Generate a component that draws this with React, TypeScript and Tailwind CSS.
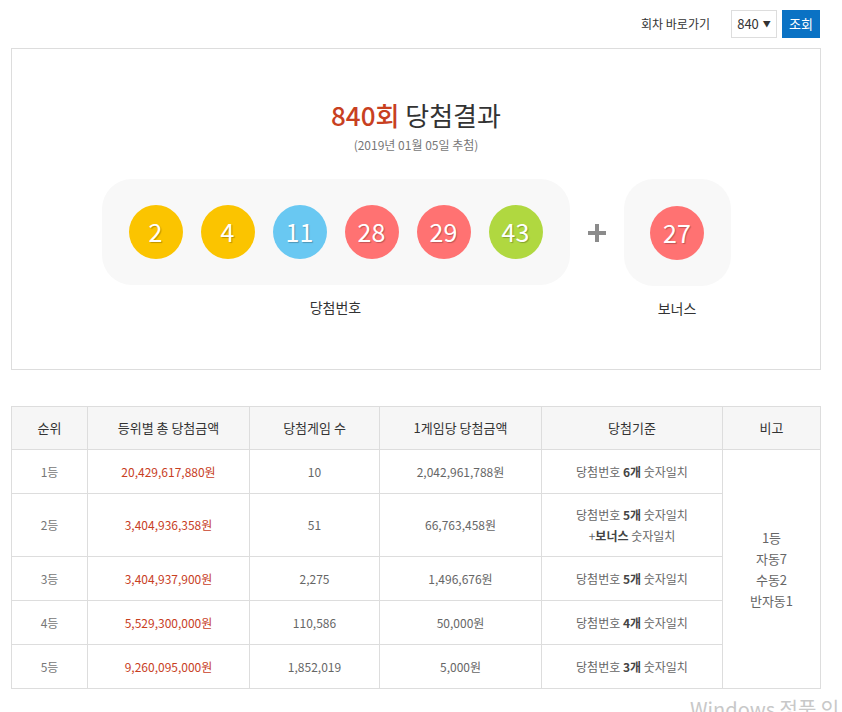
import React from "react";

const balls = [
  { n: 2, c: "bg-[#fbc400]" },
  { n: 4, c: "bg-[#fbc400]" },
  { n: 11, c: "bg-[#69c8f2]" },
  { n: 28, c: "bg-[#ff7272]" },
  { n: 29, c: "bg-[#ff7272]" },
  { n: 43, c: "bg-[#b0d840]" },
];

const rows = [
  { rank: "1등", total: "20,429,617,880원", games: "10", per: "2,042,961,788원", cnt: "6개", h: "h-[44px]" },
  { rank: "2등", total: "3,404,936,358원", games: "51", per: "66,763,458원", cnt: "5개", h: "h-[63px]", bonus: true },
  { rank: "3등", total: "3,404,937,900원", games: "2,275", per: "1,496,676원", cnt: "5개", h: "h-[44px]" },
  { rank: "4등", total: "5,529,300,000원", games: "110,586", per: "50,000원", cnt: "4개", h: "h-[44px]" },
  { rank: "5등", total: "9,260,095,000원", games: "1,852,019", per: "5,000원", cnt: "3개", h: "h-[44px]" },
];

function Ball({ n, c }: { n: number; c: string }) {
  return (
    <span
      className={`flex h-[54px] w-[54px] items-center justify-center rounded-full text-[25px] text-white [text-shadow:1px_1px_1px_rgba(0,0,0,0.25)] ${c}`}
    >
      {n}
    </span>
  );
}

export default function App() {
  return (
    <div className="relative h-[712px] w-[842px] overflow-hidden bg-white font-['Noto_Sans_CJK_KR','Noto_Sans',sans-serif] text-[#333]">
      <div className="flex h-[38px] items-end justify-end pr-[22px]">
        <span className="mr-[21px] self-center pt-[10px] text-[12px] text-[#333]">회차 바로가기</span>
        <div className="flex h-[28px] w-[46px] items-center justify-center gap-[4px] border border-[#ddd] text-[13px] text-[#333]">
          840<span className="text-[8px]">▼</span>
        </div>
        <button className="ml-[5px] h-[28px] w-[38px] bg-[#0a72c4] text-[13px] text-white">조회</button>
      </div>

      <div className="ml-[11px] mt-[10px] flex h-[322px] w-[810px] flex-col items-center border border-[#ddd] pt-[48px]">
        <h2 className="text-[26px] leading-[36px] text-[#333]">
          <span className="font-medium text-[#c8401f]">840회</span> 당첨결과
        </h2>
        <p className="mt-[3px] text-[12px] text-[#777]">(2019년 01월 05일 추첨)</p>

        <div className="mt-[25px] flex items-start gap-[18px]">
          <div className="flex flex-col items-center">
            <div className="flex gap-[18px] rounded-[30px] bg-[#f8f8f8] px-[27px] py-[26px]">
              {balls.map((b) => (
                <Ball key={b.n} n={b.n} c={b.c} />
              ))}
            </div>
            <span className="mt-[12px] text-[14px] text-[#333]">당첨번호</span>
          </div>
          <div className="flex h-[107px] w-[18px] items-center justify-center">
            <span className="relative block h-[18px] w-[18px]">
              <span className="absolute left-0 top-[7px] h-[4px] w-[18px] bg-[#8b8b8b]" />
              <span className="absolute left-[7px] top-0 h-[18px] w-[4px] bg-[#8b8b8b]" />
            </span>
          </div>
          <div className="flex flex-col items-center">
            <div className="flex h-[107px] w-[107px] items-center justify-center rounded-[30px] bg-[#f8f8f8]">
              <Ball n={27} c="bg-[#ff7272]" />
            </div>
            <span className="mt-[12px] text-[14px] text-[#333]">보너스</span>
          </div>
        </div>
      </div>

      <table className="ml-[11px] mt-[36px] w-[810px] table-fixed border-collapse text-center text-[12px]">
        <colgroup>
          <col className="w-[76px]" />
          <col className="w-[162px]" />
          <col className="w-[130px]" />
          <col className="w-[162px]" />
          <col className="w-[181px]" />
          <col />
        </colgroup>
        <thead>
          <tr className="h-[43px] bg-[#f6f6f6] text-[13px] text-[#333]">
            <th className="border border-[#ddd] font-normal">순위</th>
            <th className="border border-[#ddd] font-normal">등위별 총 당첨금액</th>
            <th className="border border-[#ddd] font-normal">당첨게임 수</th>
            <th className="border border-[#ddd] font-normal">1게임당 당첨금액</th>
            <th className="border border-[#ddd] font-normal">당첨기준</th>
            <th className="border border-[#ddd] font-normal">비고</th>
          </tr>
        </thead>
        <tbody className="text-[#666]">
          {rows.map((r, i) => (
            <tr key={r.rank} className={r.h}>
              <td className="border border-[#ddd] text-[#777]">{r.rank}</td>
              <td className="border border-[#ddd] text-[#c8401f]">{r.total}</td>
              <td className="border border-[#ddd]">{r.games}</td>
              <td className="border border-[#ddd]">{r.per}</td>
              <td className="border border-[#ddd] leading-[21px]">
                당첨번호 <strong className="font-semibold text-[#444]">{r.cnt}</strong> 숫자일치
                {r.bonus && (
                  <>
                    <br />+<strong className="font-semibold text-[#444]">보너스</strong> 숫자일치
                  </>
                )}
              </td>
              {i === 0 && (
                <td rowSpan={5} className="border border-[#ddd] align-middle text-[13px] leading-[21px]">
                  1등
                  <br />
                  자동7
                  <br />
                  수동2
                  <br />
                  반자동1
                </td>
              )}
            </tr>
          ))}
        </tbody>
      </table>

      <span className="absolute left-[690px] top-[694px] text-[20px] text-[#c8c8c8]">Windows 정품 인증</span>
    </div>
  );
}
